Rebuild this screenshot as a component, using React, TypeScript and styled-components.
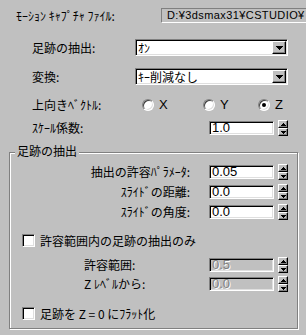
import React from "react";
import styled, { createGlobalStyle, css } from "styled-components";

const GlobalStyle = createGlobalStyle`
  html, body {
    margin: 0;
    padding: 0;
  }
  body {
    background: #c0c0c0;
    width: 306px;
    height: 335px;
    overflow: hidden;
    font-family: "Noto Sans CJK JP", "Noto Sans", sans-serif;
    font-size: 12px;
    color: #000;
  }
`;

const sunken = css`
  box-sizing: border-box;
  border: 1px solid;
  border-color: #808080 #ffffff #ffffff #808080;
  box-shadow: inset 1px 1px 0 #000000, inset -1px -1px 0 #dfdfdf;
`;

const raised = css`
  box-sizing: border-box;
  border: 1px solid;
  border-color: #ffffff #000000 #000000 #ffffff;
  box-shadow: inset -1px -1px 0 #808080;
  background: #c0c0c0;
`;

const Dialog = styled.div`
  width: 306px;
  height: 335px;
  display: flex;
  flex-direction: column;
  overflow: hidden;
`;

const Row = styled.div<{ $top: number; $h: number; $indent: number }>`
  display: flex;
  align-items: center;
  flex-shrink: 0;
  margin-top: ${(p) => p.$top}px;
  height: ${(p) => p.$h}px;
  padding-left: ${(p) => p.$indent}px;
`;

const Label = styled.span<{ $w: number; $right?: boolean }>`
  width: ${(p) => p.$w}px;
  flex-shrink: 0;
  white-space: nowrap;
  line-height: 14px;
  text-align: ${(p) => (p.$right ? "right" : "left")};
`;

const FileBox = styled.div`
  box-sizing: border-box;
  width: 170px;
  height: 15px;
  flex-shrink: 0;
  border: 1px solid;
  border-color: #808080 #ffffff #ffffff #808080;
  padding-left: 5px;
  font-family: "Liberation Sans", Arial, sans-serif;
  font-size: 11px;
  letter-spacing: 0.4px;
  line-height: 13px;
  white-space: nowrap;
  overflow: hidden;
`;

const Combo = styled.div`
  ${sunken};
  width: 153px;
  height: 17px;
  background: #ffffff;
  display: flex;
  align-items: center;
  padding: 1px;
`;

const ComboText = styled.span`
  flex: 1;
  padding-left: 1px;
  line-height: 13px;
  white-space: nowrap;
`;

const DropButton = styled.div`
  ${raised};
  width: 14px;
  height: 13px;
  display: flex;
  align-items: center;
  justify-content: center;
`;

const Field = styled.div<{ $disabled?: boolean }>`
  ${sunken};
  width: 65px;
  height: 14px;
  flex-shrink: 0;
  padding-left: 2px;
  background: ${(p) => (p.$disabled ? "#c0c0c0" : "#ffffff")};
  color: ${(p) => (p.$disabled ? "#808080" : "#000000")};
  text-shadow: ${(p) => (p.$disabled ? "1px 1px 0 #ffffff" : "none")};
  font-family: "Liberation Sans", Arial, sans-serif;
  font-size: 13px;
  line-height: 12px;
`;

const Spinner = styled.div`
  width: 10px;
  height: 16px;
  margin-left: 4px;
  display: flex;
  flex-direction: column;
  flex-shrink: 0;
`;

const SpinHalf = styled.div`
  ${raised};
  flex: 1;
  display: flex;
  align-items: center;
  justify-content: center;
`;

const RadioItem = styled.label<{ $w?: number }>`
  display: flex;
  align-items: center;
  gap: 5px;
  width: ${(p) => (p.$w ? `${p.$w}px` : "auto")};
  flex-shrink: 0;
  font-family: "Liberation Sans", Arial, sans-serif;
  font-size: 13px;
  line-height: 13px;
`;

const RadioCircle = styled.span<{ $checked?: boolean }>`
  box-sizing: border-box;
  width: 12px;
  height: 12px;
  border-radius: 50%;
  border: 1px solid;
  border-color: #808080 #ffffff #ffffff #808080;
  box-shadow: inset 1px 1px 0 #404040, inset -1px -1px 0 #dfdfdf;
  background: #ffffff;
  display: flex;
  align-items: center;
  justify-content: center;

  &::after {
    content: "";
    width: 4px;
    height: 4px;
    border-radius: 50%;
    background: ${(p) => (p.$checked ? "#000000" : "transparent")};
  }
`;

const CheckBox = styled.span`
  ${sunken};
  width: 13px;
  height: 13px;
  background: #ffffff;
  flex-shrink: 0;
  margin-right: 5px;
`;

const Group = styled.div`
  position: relative;
  box-sizing: border-box;
  flex-shrink: 0;
  margin: 16px 0 0 9px;
  width: 289px;
  height: 177px;
  border: 1px solid #808080;
  box-shadow: inset 1px 1px 0 #ffffff, 1px 1px 0 #ffffff;
  display: flex;
  flex-direction: column;
`;

const Legend = styled.span`
  position: absolute;
  top: -9px;
  left: 5px;
  padding: 0 2px;
  background: #c0c0c0;
  line-height: 14px;
  white-space: nowrap;
`;

const Arrow = ({ up, w = 7, h = 4 }: { up?: boolean; w?: number; h?: number }) => (
  <svg width={w} height={h} viewBox={`0 0 ${w} ${h}`} shapeRendering="crispEdges">
    <polygon
      points={up ? `${w / 2},0 ${w},${h} 0,${h}` : `0,0 ${w},0 ${w / 2},${h}`}
      fill="#000"
    />
  </svg>
);

const SpinBox = ({ value, disabled }: { value: string; disabled?: boolean }) => (
  <>
    <Field $disabled={disabled}>{value}</Field>
    <Spinner>
      <SpinHalf>
        <Arrow up w={5} h={3} />
      </SpinHalf>
      <SpinHalf>
        <Arrow w={5} h={3} />
      </SpinHalf>
    </Spinner>
  </>
);

const Dropdown = ({ value }: { value: string }) => (
  <Combo>
    <ComboText>{value}</ComboText>
    <DropButton>
      <Arrow />
    </DropButton>
  </Combo>
);

export default function App() {
  return (
    <>
      <GlobalStyle />
      <Dialog>
        <Row $top={8} $h={15} $indent={16}>
          <Label $w={145}>ﾓｰｼｮﾝ ｷｬﾌﾟﾁｬ ﾌｧｲﾙ:</Label>
          <FileBox>D:¥3dsmax31¥CSTUDIO¥</FileBox>
        </Row>
        <Row $top={16} $h={17} $indent={32}>
          <Label $w={103}>足跡の抽出:</Label>
          <Dropdown value="ｵﾝ" />
        </Row>
        <Row $top={12} $h={17} $indent={32}>
          <Label $w={103}>変換:</Label>
          <Dropdown value="ｷｰ削減なし" />
        </Row>
        <Row $top={13} $h={13} $indent={32}>
          <Label $w={110}>上向きﾍﾞｸﾄﾙ:</Label>
          <RadioItem $w={61}>
            <RadioCircle />X
          </RadioItem>
          <RadioItem $w={55}>
            <RadioCircle />Y
          </RadioItem>
          <RadioItem>
            <RadioCircle $checked />Z
          </RadioItem>
        </Row>
        <Row $top={9} $h={16} $indent={32}>
          <Label $w={177}>ｽｹｰﾙ係数:</Label>
          <SpinBox value="1.0" />
        </Row>

        <Group>
          <Legend>足跡の抽出</Legend>
          <Row $top={11} $h={16} $indent={0}>
            <Label $w={180} $right>
              抽出の許容ﾊﾟﾗﾒｰﾀ:
            </Label>
            <Label $w={19} />
            <SpinBox value="0.05" />
          </Row>
          <Row $top={4} $h={16} $indent={0}>
            <Label $w={180} $right>
              ｽﾗｲﾄﾞの距離:
            </Label>
            <Label $w={19} />
            <SpinBox value="0.0" />
          </Row>
          <Row $top={4} $h={16} $indent={0}>
            <Label $w={180} $right>
              ｽﾗｲﾄﾞの角度:
            </Label>
            <Label $w={19} />
            <SpinBox value="0.0" />
          </Row>
          <Row $top={14} $h={13} $indent={12}>
            <CheckBox />
            <Label $w={240}>許容範囲内の足跡の抽出のみ</Label>
          </Row>
          <Row $top={10} $h={16} $indent={74}>
            <Label $w={125}>許容範囲:</Label>
            <SpinBox value="0.5" disabled />
          </Row>
          <Row $top={3} $h={16} $indent={74}>
            <Label $w={125}>Z ﾚﾍﾞﾙから:</Label>
            <SpinBox value="0.0" disabled />
          </Row>
          <Row $top={15} $h={13} $indent={12}>
            <CheckBox />
            <Label $w={240}>足跡を Z = 0 にﾌﾗｯﾄ化</Label>
          </Row>
        </Group>
      </Dialog>
    </>
  );
}
